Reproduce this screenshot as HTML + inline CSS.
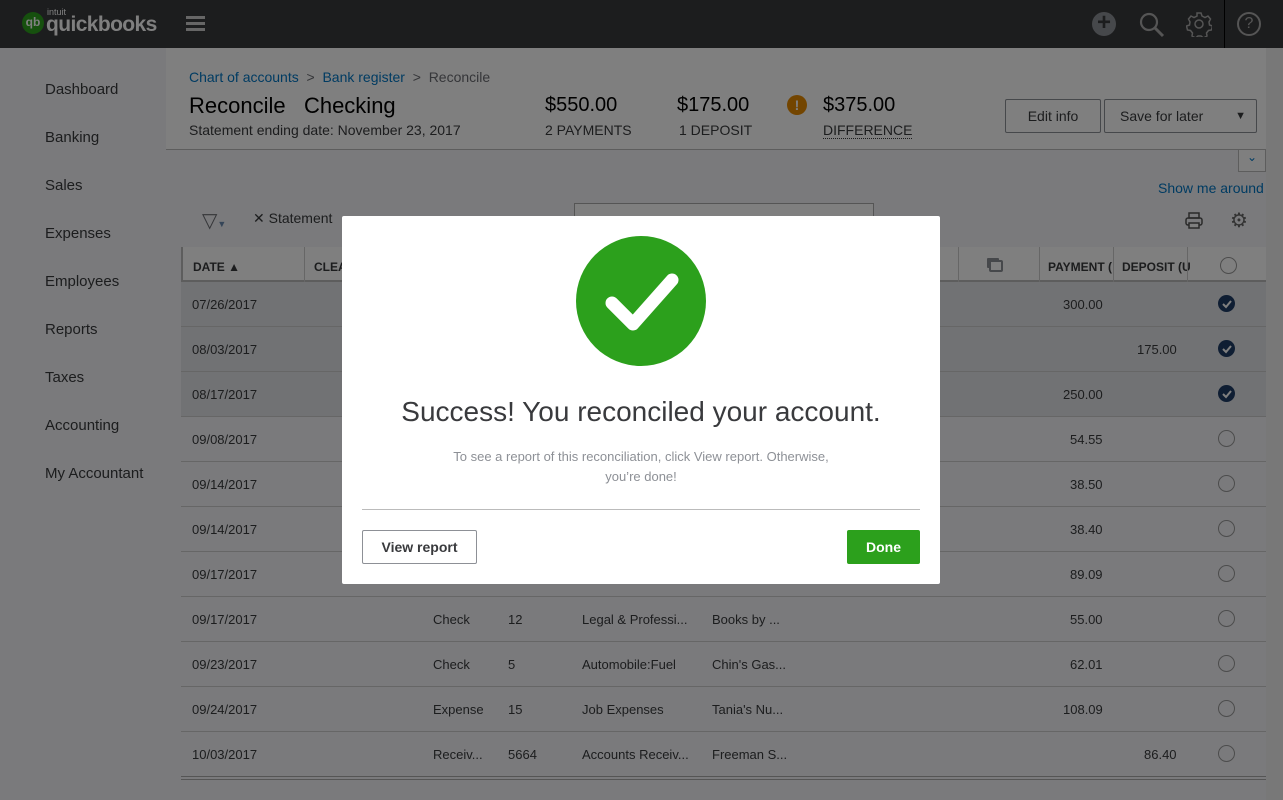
<!DOCTYPE html>
<html><head><meta charset="utf-8"><style>
*{box-sizing:border-box;margin:0;padding:0}
body{width:1283px;height:800px;overflow:hidden;font-family:"Liberation Sans",sans-serif;background:#fff;position:relative;color:#393a3d}
.a{position:absolute}
.top{left:0;top:0;width:1283px;height:48px;background:#393a3d}
.side{left:0;top:48px;width:166px;height:752px;background:#f4f5f8}
.side div{position:absolute;left:45px;font-size:15px;color:#393a3d}
.hdr{left:166px;top:48px;width:1100px;height:102px;background:#fff;border-bottom:1px solid #bbb}
.body{left:166px;top:150px;width:1100px;height:650px;background:#f4f5f8}
.scroll{left:1266px;top:48px;width:17px;height:752px;background:#f0f0f0}
.link{color:#0077c5}
.tbl{left:181px;top:247px;width:1085px}
.row{position:absolute;left:0;width:1085px;height:45px;border-bottom:1px solid #ccc;font-size:13px;color:#393a3d}
.row span{position:absolute;top:15px}
.th{font-size:12px;font-weight:bold;color:#393a3d}
.circ{position:absolute;left:1037px;top:13px;width:17px;height:17px;border:1px solid #999;border-radius:50%}
.chk{position:absolute;left:1037px;top:13px;width:17px;height:17px;border-radius:50%;background:#1f3d66}
.ov{left:0;top:0;width:1283px;height:800px;background:rgba(0,0,0,.5)}
.modal{left:342px;top:216px;width:598px;height:368px;background:#fff;border-radius:2px}
.btn{position:absolute;border:1px solid #8d9096;border-radius:2px;font-size:14px;font-weight:bold;text-align:center;background:#fff}
</style></head><body>
<div class="a top">
  <div class="a" style="left:22px;top:12px;width:22px;height:22px;border-radius:50%;background:#2ca01c;color:#fff;font-size:12px;font-weight:bold;text-align:center;line-height:21px">qb</div>
  <div class="a" style="left:47px;top:7px;color:#fff;font-size:9px">intuit</div>
  <div class="a" style="left:46px;top:13px;color:#fff;font-size:21px;font-weight:bold;letter-spacing:-0.6px">quickbooks</div>
  <div class="a" style="left:186px;top:16px;width:19px;height:3px;background:#ccc;box-shadow:0 6px 0 #ccc,0 12px 0 #ccc"></div>
  <div class="a" style="left:1092px;top:12px;width:24px;height:24px;border-radius:50%;background:#8d9096;color:#393a3d;font-size:24px;line-height:22px;text-align:center;font-weight:bold">+</div>
  <svg class="a" style="left:1138px;top:11px" width="28" height="28"><circle cx="11" cy="11" r="8" fill="none" stroke="#aaa" stroke-width="2.2"/><line x1="17" y1="17" x2="25" y2="25" stroke="#aaa" stroke-width="3"/></svg>
  <svg class="a" style="left:1186px;top:11px" width="26" height="26" viewBox="0 0 26 26"><circle cx="13" cy="13" r="4" fill="none" stroke="#aaa" stroke-width="1.5"/><path d="M11 2h4l1 3 3 1.5 3-1.5 2.5 3-1.5 3 .5 3 3 1-1 4-3 .5-2 2.5.5 3-3.5 2-2.5-2h-3l-2.5 2-3.5-2 .5-3-2-2.5-3-.5-1-4 3-1 .5-3-1.5-3 2.5-3 3 1.5 3-1.5z" fill="none" stroke="#aaa" stroke-width="1.5"/></svg>
  <div class="a" style="left:1224px;top:0;width:1px;height:48px;background:#000"></div>
  <div class="a" style="left:1237px;top:12px;width:24px;height:24px;border-radius:50%;border:2px solid #aaa;color:#aaa;font-size:16px;text-align:center;line-height:20px">?</div>
</div>
<div class="a side">
  <div style="top:33px">Dashboard</div><div style="top:81px">Banking</div><div style="top:129px">Sales</div><div style="top:177px">Expenses</div><div style="top:225px">Employees</div><div style="top:273px">Reports</div><div style="top:321px">Taxes</div><div style="top:369px">Accounting</div><div style="top:417px">My Accountant</div>
</div>
<div class="a hdr">
  <div class="a" style="left:23px;top:21px;font-size:14px;color:#6b6c72"><span class="link">Chart of accounts</span> &nbsp;&gt;&nbsp; <span class="link">Bank register</span> &nbsp;&gt;&nbsp; Reconcile</div>
  <div class="a" style="left:23px;top:45px;font-size:22px;color:#000">Reconcile &nbsp;&nbsp;Checking</div>
  <div class="a" style="left:23px;top:74px;font-size:14px;color:#393a3d">Statement ending date: November 23, 2017</div>
  <div class="a" style="left:379px;top:46px;font-size:20px;color:#000">$550.00</div>
  <div class="a" style="left:379px;top:74px;font-size:14px">2 PAYMENTS</div>
  <div class="a" style="left:511px;top:46px;font-size:20px;color:#000">$175.00</div>
  <div class="a" style="left:513px;top:74px;font-size:14px">1 DEPOSIT</div>
  <div class="a" style="left:621px;top:47px;width:20px;height:20px;border-radius:50%;background:#e68a00;color:#fff;font-weight:bold;font-size:14px;text-align:center;line-height:20px">!</div>
  <div class="a" style="left:657px;top:46px;font-size:20px;color:#000">$375.00</div>
  <div class="a" style="left:657px;top:74px;font-size:14px;border-bottom:1px dotted #393a3d">DIFFERENCE</div>
  <div class="btn" style="left:839px;top:51px;width:96px;height:34px;line-height:32px;font-weight:normal">Edit info</div>
  <div class="btn" style="left:938px;top:51px;width:153px;height:34px;line-height:32px;font-weight:normal;text-align:left;padding-left:15px">Save for later<span style="position:absolute;right:10px;font-size:11px">▼</span></div>
</div>
<div class="a body">
  <div class="a" style="left:1072px;top:0;width:28px;height:22px;background:#fff;border:1px solid #bbb;border-top:none;color:#0077c5;text-align:center;font-size:12px">⌄</div>
  <div class="a link" style="left:992px;top:30px;font-size:14px">Show me around</div>
  <div class="a" style="left:36px;top:58px;font-size:20px;color:#6b6c72">▽<span style="font-size:9px;color:#6b8bb0">▼</span></div>
  <div class="a" style="left:87px;top:60px;font-size:14px">✕ Statement</div>
  <div class="a" style="left:408px;top:53px;width:300px;height:30px;border:1px solid #aaa;background:#fff"></div>
  <svg class="a" style="left:1018px;top:61px" width="20" height="20"><rect x="5" y="2" width="10" height="5" fill="none" stroke="#555" stroke-width="1.5"/><rect x="2" y="7" width="16" height="7" rx="2" fill="none" stroke="#555" stroke-width="1.5"/><rect x="5" y="12" width="10" height="5" fill="#fff" stroke="#555" stroke-width="1.5"/></svg>
  <div class="a" style="left:1064px;top:58px;font-size:20px;color:#666">⚙</div>
</div>
<div class="a scroll"></div>
<div class="a tbl">
  <div class="row th" style="top:0;height:35px;background:#fff;border-bottom:2px solid #bbb;border-left:2px solid #bbb">
    <span style="left:10px;top:13px">DATE ▲</span><span style="left:131px;top:13px">CLEA</span>
    <span style="left:806px;top:13px;width:14px;height:12px;border:2px solid #8d9096;border-radius:2px;background:#fff;box-shadow:-3px -3px 0 -1px #8d9096"></span>
    <span style="left:865px;top:13px">PAYMENT (</span><span style="left:939px;top:13px">DEPOSIT (U</span>
    <div class="circ" style="top:10px"></div>
    <span style="left:121px;top:0;width:1px;height:35px;background:#ccc"></span>
    <span style="left:775px;top:0;width:1px;height:35px;background:#ccc"></span>
    <span style="left:856px;top:0;width:1px;height:35px;background:#ccc"></span>
    <span style="left:930px;top:0;width:1px;height:35px;background:#ccc"></span>
    <span style="left:1004px;top:0;width:1px;height:35px;background:#ccc"></span>
  </div>
  <div class="row" style="top:35px;background:#e3e5e8"><span style="left:11px">07/26/2017</span><span style="left:882px">300.00</span><div class="chk"><svg width="17" height="17"><path d="M5 9l3 3 5-6" fill="none" stroke="#fff" stroke-width="2"/></svg></div></div>
  <div class="row" style="top:80px;background:#e3e5e8"><span style="left:11px">08/03/2017</span><span style="left:956px">175.00</span><div class="chk"><svg width="17" height="17"><path d="M5 9l3 3 5-6" fill="none" stroke="#fff" stroke-width="2"/></svg></div></div>
  <div class="row" style="top:125px;background:#e3e5e8"><span style="left:11px">08/17/2017</span><span style="left:882px">250.00</span><div class="chk"><svg width="17" height="17"><path d="M5 9l3 3 5-6" fill="none" stroke="#fff" stroke-width="2"/></svg></div></div>
  <div class="row" style="top:170px"><span style="left:11px">09/08/2017</span><span style="left:889px">54.55</span><div class="circ"></div></div>
  <div class="row" style="top:215px"><span style="left:11px">09/14/2017</span><span style="left:889px">38.50</span><div class="circ"></div></div>
  <div class="row" style="top:260px"><span style="left:11px">09/14/2017</span><span style="left:889px">38.40</span><div class="circ"></div></div>
  <div class="row" style="top:305px"><span style="left:11px">09/17/2017</span><span style="left:889px">89.09</span><div class="circ"></div></div>
  <div class="row" style="top:350px"><span style="left:11px">09/17/2017</span><span style="left:252px">Check</span><span style="left:327px">12</span><span style="left:401px">Legal &amp; Professi...</span><span style="left:531px">Books by ...</span><span style="left:889px">55.00</span><div class="circ"></div></div>
  <div class="row" style="top:395px"><span style="left:11px">09/23/2017</span><span style="left:252px">Check</span><span style="left:327px">5</span><span style="left:401px">Automobile:Fuel</span><span style="left:531px">Chin's Gas...</span><span style="left:889px">62.01</span><div class="circ"></div></div>
  <div class="row" style="top:440px"><span style="left:11px">09/24/2017</span><span style="left:252px">Expense</span><span style="left:327px">15</span><span style="left:401px">Job Expenses</span><span style="left:531px">Tania's Nu...</span><span style="left:882px">108.09</span><div class="circ"></div></div>
  <div class="row" style="top:485px;border-bottom:4px double #aaa;height:48px"><span style="left:11px">10/03/2017</span><span style="left:252px">Receiv...</span><span style="left:327px">5664</span><span style="left:401px">Accounts Receiv...</span><span style="left:531px">Freeman S...</span><span style="left:963px">86.40</span><div class="circ"></div></div>
</div>
<div class="a ov"></div>
<div class="a modal">
  <svg class="a" style="left:234px;top:20px" width="130" height="130"><circle cx="65" cy="65" r="65" fill="#2ca01c"/><path d="M36 67 L57 88 L96 44" fill="none" stroke="#fff" stroke-width="13" stroke-linecap="round" stroke-linejoin="round"/></svg>
  <div class="a" style="left:0;top:180px;width:598px;text-align:center;font-size:28px;color:#393a3d">Success! You reconciled your account.</div>
  <div class="a" style="left:40px;top:231px;width:518px;text-align:center;font-size:13px;line-height:20px;color:#8d9096">To see a report of this reconciliation, click View report. Otherwise,<br>you’re done!</div>
  <div class="a" style="left:20px;top:293px;width:558px;height:1px;background:#bbb"></div>
  <div class="btn" style="left:20px;top:314px;width:115px;height:34px;line-height:32px;color:#393a3d">View report</div>
  <div class="btn" style="left:505px;top:314px;width:73px;height:34px;line-height:32px;color:#fff;background:#2ca01c;border-color:#2ca01c">Done</div>
</div>
</body></html>
